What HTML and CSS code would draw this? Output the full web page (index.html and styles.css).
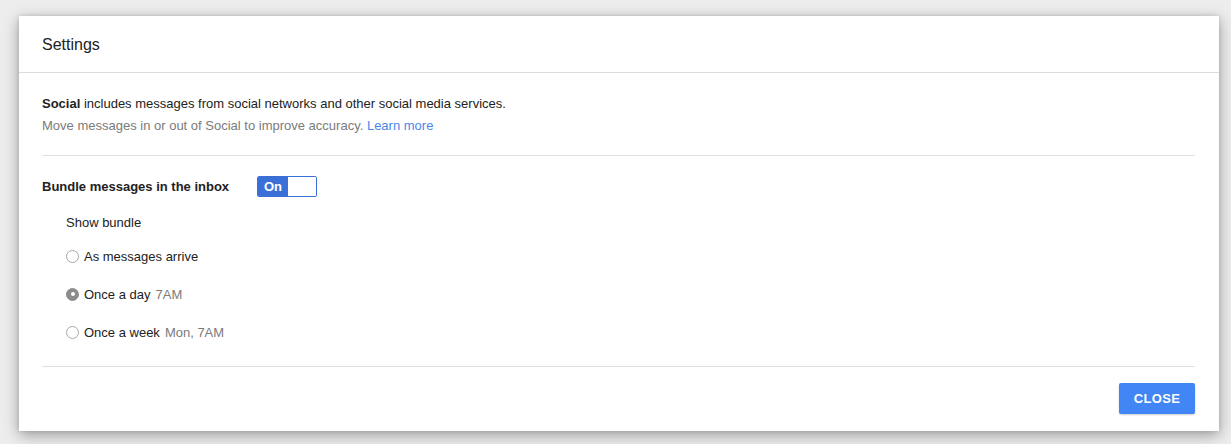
FILE: index.html
```html
<!DOCTYPE html>
<html>
<head>
<meta charset="utf-8">
<link rel="stylesheet" href="styles.css">
</head>
<body>
<div class="dialog">
  <div class="header">Settings</div>
  <div class="content">
    <div class="intro">
      <div class="line"><b>Social</b> includes messages from social networks and other social media services.</div>
      <div class="line muted">Move messages in or out of Social to improve accuracy. <a class="link" href="#">Learn more</a></div>
    </div>
    <div class="bundle">
      <div class="bundle-row">
        <span class="bundle-label">Bundle messages in the inbox</span>
        <span class="toggle"><span class="toggle-on">On</span><span class="toggle-off"></span></span>
      </div>
      <div class="options">
        <div class="show">Show bundle</div>
        <label class="radio-row"><span class="radio"></span>As messages arrive</label>
        <label class="radio-row"><span class="radio checked"></span>Once a day <span class="muted when">7AM</span></label>
        <label class="radio-row"><span class="radio"></span>Once a week <span class="muted when">Mon, 7AM</span></label>
      </div>
    </div>
  </div>
  <div class="footer">
    <button class="close">CLOSE</button>
  </div>
</div>
</body>
</html>
```

FILE: styles.css
```css
html, body {
  margin: 0;
  padding: 0;
}
body {
  background: #ededed;
  font-family: "Liberation Sans", Arial, sans-serif;
  color: #222;
  font-size: 13px;
  padding: 16px 0 0 19px;
  height: 444px;
  box-sizing: border-box;
  overflow: hidden;
}
.dialog {
  width: 1200px;
  height: 415px;
  background: #fff;
  box-shadow: 0 4px 14px rgba(0, 0, 0, 0.35), 0 0 4px rgba(0,0,0,0.12);
  display: flex;
  flex-direction: column;
}
.header {
  height: 57px;
  box-sizing: border-box;
  padding: 2px 0 0 23px;
  display: flex;
  align-items: center;
  font-size: 16px;
  color: #222;
  border-bottom: 1px solid #dcdcdc;
}
.content {
  padding: 0 24px 0 23px;
}
.intro {
  padding: 20px 0 18px;
  border-bottom: 1px solid #e0e0e0;
}
.line {
  line-height: 22px;
}
.muted {
  color: #7b7b7b;
}
.link {
  color: #4a86e8;
  text-decoration: none;
}
.bundle {
  padding: 19px 0 23px;
  border-bottom: 1px solid #e0e0e0;
}
.bundle-row {
  display: flex;
  align-items: center;
  height: 22px;
}
.bundle-label {
  font-weight: bold;
  width: 215px;
}
.toggle {
  display: flex;
  width: 60px;
  height: 21px;
  box-sizing: border-box;
  border: 1px solid #3a6fd8;
  border-radius: 2px;
  overflow: hidden;
}
.toggle-on {
  width: 30px;
  background: #3a6fd8;
  color: #fff;
  font-weight: bold;
  display: flex;
  align-items: center;
  justify-content: center;
  font-size: 13px;
}
.toggle-off {
  flex: 1;
  background: #fff;
}
.options {
  padding-left: 24px;
}
.show {
  margin-top: 15px;
  line-height: 22px;
}
.radio-row {
  display: flex;
  align-items: center;
  height: 22px;
  margin-top: 16px;
}
.options .show + .radio-row {
  margin-top: 11px;
}
.radio {
  width: 13px;
  height: 13px;
  box-sizing: border-box;
  border: 1px solid #a8a8a8;
  border-radius: 50%;
  margin-right: 5px;
  background: #fff;
  display: inline-flex;
  align-items: center;
  justify-content: center;
}
.radio.checked {
  background: #8c8c8c;
  border-color: #8c8c8c;
}
.radio.checked::after {
  content: "";
  width: 4px;
  height: 4px;
  border-radius: 50%;
  background: #fff;
}
.when {
  margin-left: 5px;
}
.footer {
  display: flex;
  justify-content: flex-end;
  padding: 16px 24px 0 0;
}
.close {
  width: 76px;
  height: 31px;
  border: none;
  border-radius: 2px;
  background: #4285f4;
  color: #fff;
  font-family: "Liberation Sans", Arial, sans-serif;
  font-weight: bold;
  font-size: 13px;
  letter-spacing: 0.3px;
  box-shadow: 0 1px 2px rgba(0,0,0,0.2);
}
```
